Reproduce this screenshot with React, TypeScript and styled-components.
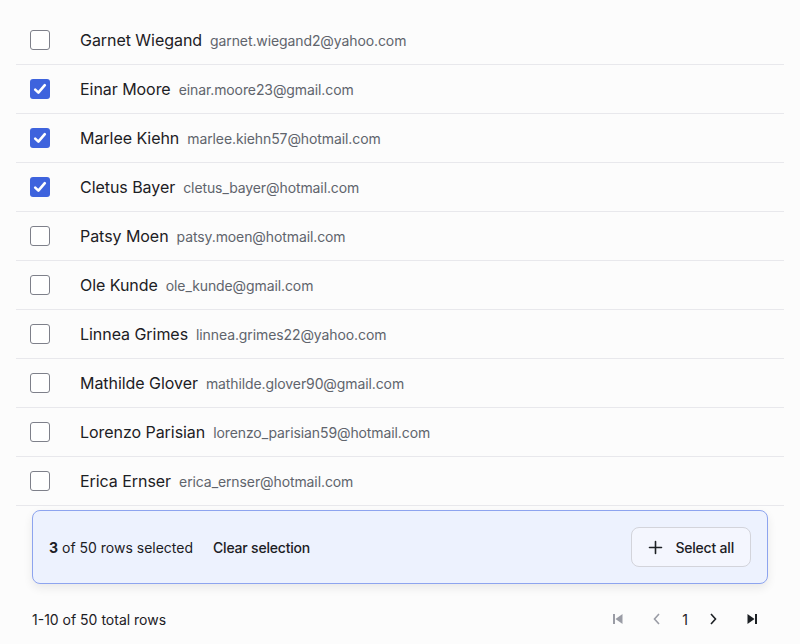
import React from "react";
import styled, { createGlobalStyle } from "styled-components";

const Global = createGlobalStyle`
  html, body { margin: 0; padding: 0; background: #fcfcfc; }
  body { font-family: Inter, "Noto Sans", sans-serif; color: #1c2024; -webkit-font-smoothing: antialiased; }
  * { box-sizing: border-box; }
`;

const Page = styled.div`
  padding: 16px 16px 0 16px;
  width: 800px;
`;

const Table = styled.div`
  display: flex;
  flex-direction: column;
`;

const Row = styled.div`
  display: flex;
  align-items: center;
  height: 49px;
  border-bottom: 1px solid #e8e8ec;
`;

const CheckCell = styled.div`
  width: 64px;
  padding-left: 14px;
  display: flex;
  align-items: center;
`;

const Box = styled.div<{ $checked: boolean }>`
  width: 20px;
  height: 20px;
  border-radius: 3px;
  display: flex;
  align-items: center;
  justify-content: center;
  background: ${(p) => (p.$checked ? "#3e63dd" : "#ffffff")};
  border: ${(p) => (p.$checked ? "none" : "1px solid #7e808a")};
`;

const Name = styled.span`
  font-size: 16px;
  color: #1c2024;
  margin-right: 8px;
  letter-spacing: -0.05px;
`;

const Email = styled.span`
  font-size: 14px;
  color: #60646c;
  letter-spacing: -0.1px;
`;

const Bar = styled.div`
  margin: 4px 16px 0 16px;
  height: 74px;
  border: 1px solid #8da4ef;
  border-radius: 8px;
  background: #edf2fe;
  box-shadow: 0 4px 10px rgba(0, 0, 0, 0.08);
  display: flex;
  align-items: center;
  padding: 0 16px;
  font-size: 14px;
`;

const Count = styled.span`
  color: #1c2024;
  b { font-weight: 700; }
`;

const ClearBtn = styled.button`
  margin-left: 20px;
  background: none;
  border: none;
  padding: 0;
  font: inherit;
  font-size: 14px;
  font-weight: 500;
  letter-spacing: -0.2px;
  color: #1c2024;
`;

const Spacer = styled.div`
  flex: 1;
`;

const SelectAllBtn = styled.button`
  height: 40px;
  display: flex;
  align-items: center;
  gap: 12px;
  padding: 0 16px;
  white-space: nowrap;
  border: 1px solid #d3d4db;
  border-radius: 8px;
  background: #f4f6fe;
  font-family: inherit;
  font-size: 14px;
  font-weight: 500;
  letter-spacing: -0.2px;
  color: #1c2024;
`;

const Footer = styled.div`
  display: flex;
  align-items: center;
  height: 72px;
  padding: 0 16px;
  margin-top: -1px;
  font-size: 14px;
  color: #1c2024;
`;

const Pager = styled.div`
  display: flex;
  align-items: center;
  gap: 7px;
`;

const Group = styled.div`
  display: flex;
  align-items: center;
`;

const PageBtn = styled.button<{ $disabled?: boolean }>`
  width: 32px;
  height: 32px;
  display: flex;
  align-items: center;
  justify-content: center;
  background: none;
  border: none;
  padding: 0;
  color: ${(p) => (p.$disabled ? "#9a9ca5" : "#1c2024")};
`;

const PageNum = styled.span`
  width: 24px;
  text-align: center;
  font-size: 14px;
  color: #1c2024;
`;

const rows = [
  ["Garnet Wiegand", "garnet.wiegand2@yahoo.com", false],
  ["Einar Moore", "einar.moore23@gmail.com", true],
  ["Marlee Kiehn", "marlee.kiehn57@hotmail.com", true],
  ["Cletus Bayer", "cletus_bayer@hotmail.com", true],
  ["Patsy Moen", "patsy.moen@hotmail.com", false],
  ["Ole Kunde", "ole_kunde@gmail.com", false],
  ["Linnea Grimes", "linnea.grimes22@yahoo.com", false],
  ["Mathilde Glover", "mathilde.glover90@gmail.com", false],
  ["Lorenzo Parisian", "lorenzo_parisian59@hotmail.com", false],
  ["Erica Ernser", "erica_ernser@hotmail.com", false],
] as const;

const Check = () => (
  <svg width="16" height="16" viewBox="0 0 16 16">
    <path d="M3.2 8.6 L6.4 11.6 L12.8 4.2" fill="none" stroke="#fff" strokeWidth="2.6" strokeLinecap="round" strokeLinejoin="round" />
  </svg>
);

const Plus = () => (
  <svg width="15" height="15" viewBox="0 0 15 15">
    <path d="M7.5 1.5 V13.5 M1.5 7.5 H13.5" stroke="#1c2024" strokeWidth="1.6" strokeLinecap="round" />
  </svg>
);

const First = () => (
  <svg width="12" height="12" viewBox="0 0 12 12" fill="currentColor">
    <rect x="1" y="1" width="2" height="10" />
    <path d="M10.5 1 L10.5 11 L3.5 6 Z" />
  </svg>
);

const Last = () => (
  <svg width="12" height="12" viewBox="0 0 12 12" fill="currentColor">
    <rect x="9" y="1" width="2" height="10" />
    <path d="M1.5 1 L1.5 11 L8.5 6 Z" />
  </svg>
);

const ChevL = () => (
  <svg width="12" height="12" viewBox="0 0 12 12">
    <path d="M8 1 L3.5 6 L8 11" fill="none" stroke="currentColor" strokeWidth="1.6" />
  </svg>
);

const ChevR = () => (
  <svg width="12" height="12" viewBox="0 0 12 12">
    <path d="M4 1 L8.5 6 L4 11" fill="none" stroke="currentColor" strokeWidth="1.6" />
  </svg>
);

export default function App() {
  return (
    <>
      <Global />
      <Page>
        <Table>
          {rows.map(([name, email, checked]) => (
            <Row key={email}>
              <CheckCell>
                <Box $checked={checked}>{checked && <Check />}</Box>
              </CheckCell>
              <Name>{name}</Name>
              <Email>{email}</Email>
            </Row>
          ))}
        </Table>
        <Bar>
          <Count>
            <b>3</b> of 50 rows selected
          </Count>
          <ClearBtn>Clear selection</ClearBtn>
          <Spacer />
          <SelectAllBtn>
            <Plus />
            Select all
          </SelectAllBtn>
        </Bar>
        <Footer>
          <span>1-10 of 50 total rows</span>
          <Spacer />
          <Pager>
            <PageBtn $disabled>
              <First />
            </PageBtn>
            <Group>
              <PageBtn $disabled>
                <ChevL />
              </PageBtn>
              <PageNum>1</PageNum>
              <PageBtn>
                <ChevR />
              </PageBtn>
            </Group>
            <PageBtn>
              <Last />
            </PageBtn>
          </Pager>
        </Footer>
      </Page>
    </>
  );
}
